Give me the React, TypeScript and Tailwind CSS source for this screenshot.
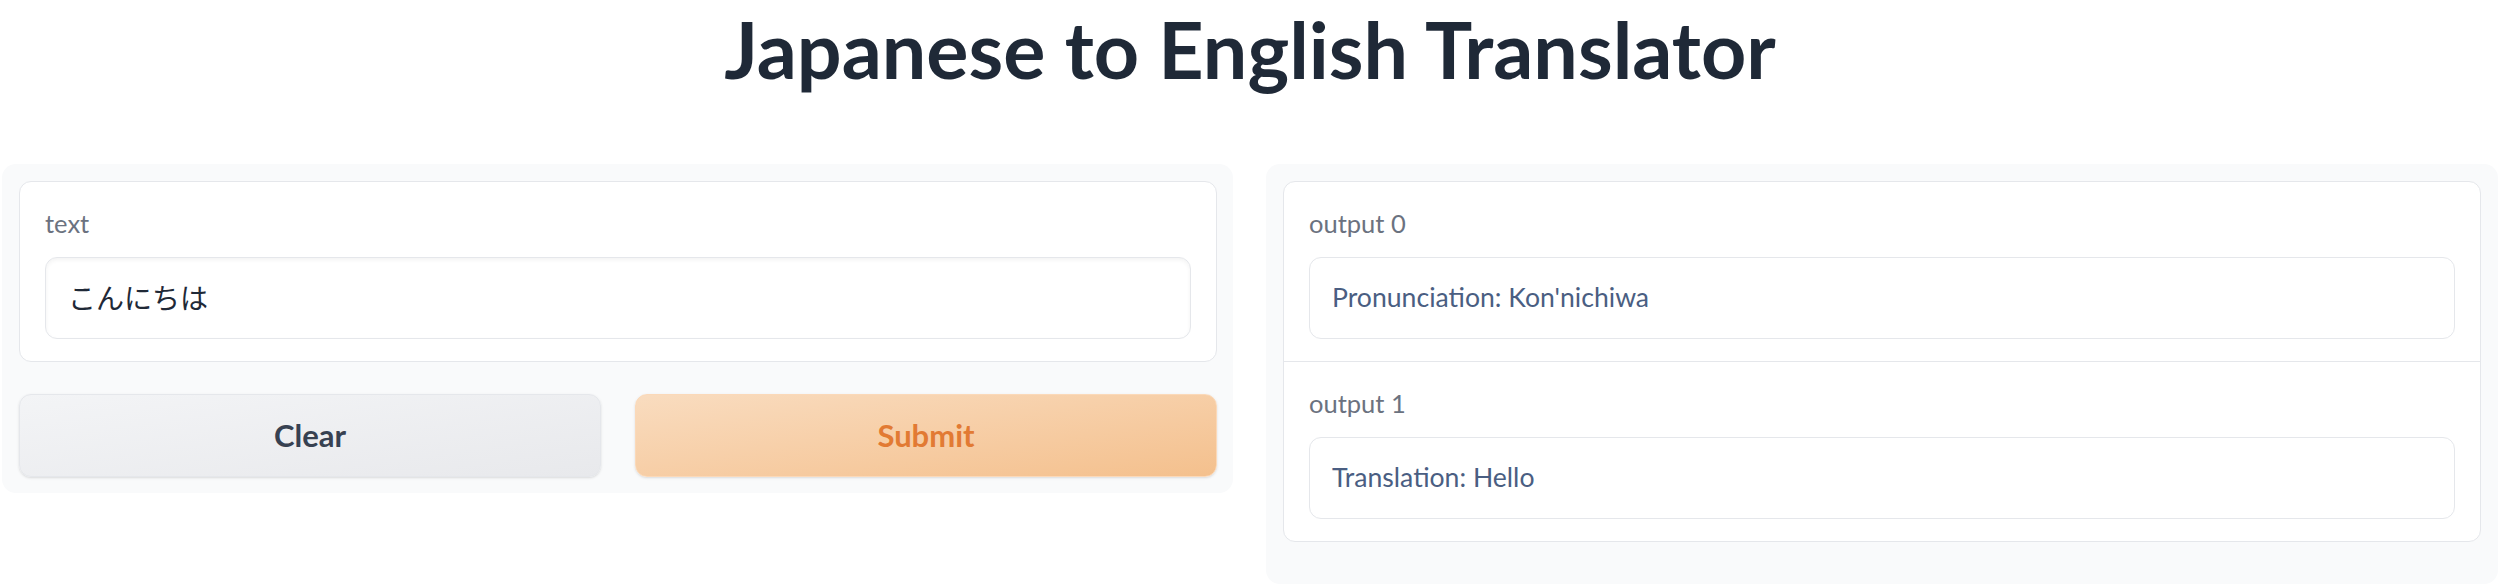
const Field = ({ label, value, input }: { label: string; value: string; input?: boolean }) => (
  <div className="px-[25px] pt-[26px] pb-[22px]">
    <div className="h-[30px] text-[25.5px] leading-[30px] text-[#6b7280]">{label}</div>
    <div
      className={
        "mt-[19px] h-[82px] flex items-center rounded-[12px] border border-[#e5e7eb] bg-white px-[22px] " +
        (input ? "shadow-[inset_0_2px_4px_rgba(0,0,0,0.05)] text-[28px] text-[#1f2937]" : "text-[26.6px] text-[#4a5e82]")
      }
    >
      {value}
    </div>
  </div>
)

export default function App() {
  return (
    <div className="w-[2512px] h-[584px] bg-white font-['Lato','Noto_Sans_CJK_JP',sans-serif] overflow-hidden">
      <div className="pl-[2px] pr-[14px]">
        <div className="h-[164px]">
          <h1 className="pt-[1px] text-center text-[79px] leading-[96px] font-bold text-[#1f2937]">
            Japanese to English Translator
          </h1>
        </div>
        <div className="flex items-start gap-[33px]">
          {/* input side */}
          <div className="flex-1 rounded-[14px] bg-[#f9fafb] pt-[17px] pb-[16px] pl-[17px] pr-[16px]">
            <div className="rounded-[12px] border border-[#e5e7eb] bg-white">
              <Field label="text" value="こんにちは" input />
            </div>
            <div className="mt-[32px] grid grid-cols-2 gap-[34px]">
              <button className="h-[83px] rounded-[12px] border border-[#e5e7eb] bg-gradient-to-br from-[#f3f4f6] to-[#e8e9ec] text-[31px] font-bold text-[#374151] shadow-sm">
                Clear
              </button>
              <button className="h-[83px] rounded-[12px] border border-[#fbd9b9] bg-gradient-to-br from-[#f9dcbf] to-[#f4c08d] text-[31px] font-bold text-[#e27a33] shadow-sm">
                Submit
              </button>
            </div>
          </div>
          {/* output side */}
          <div className="flex-1 h-[420px] rounded-[14px] bg-[#f9fafb] pt-[17px] px-[17px]">
            <div className="rounded-[12px] border border-[#e5e7eb] bg-white divide-y divide-[#e5e7eb]">
              <Field label="output 0" value="Pronunciation: Kon'nichiwa" />
              <Field label="output 1" value="Translation: Hello" />
            </div>
          </div>
        </div>
      </div>
    </div>
  )
}
